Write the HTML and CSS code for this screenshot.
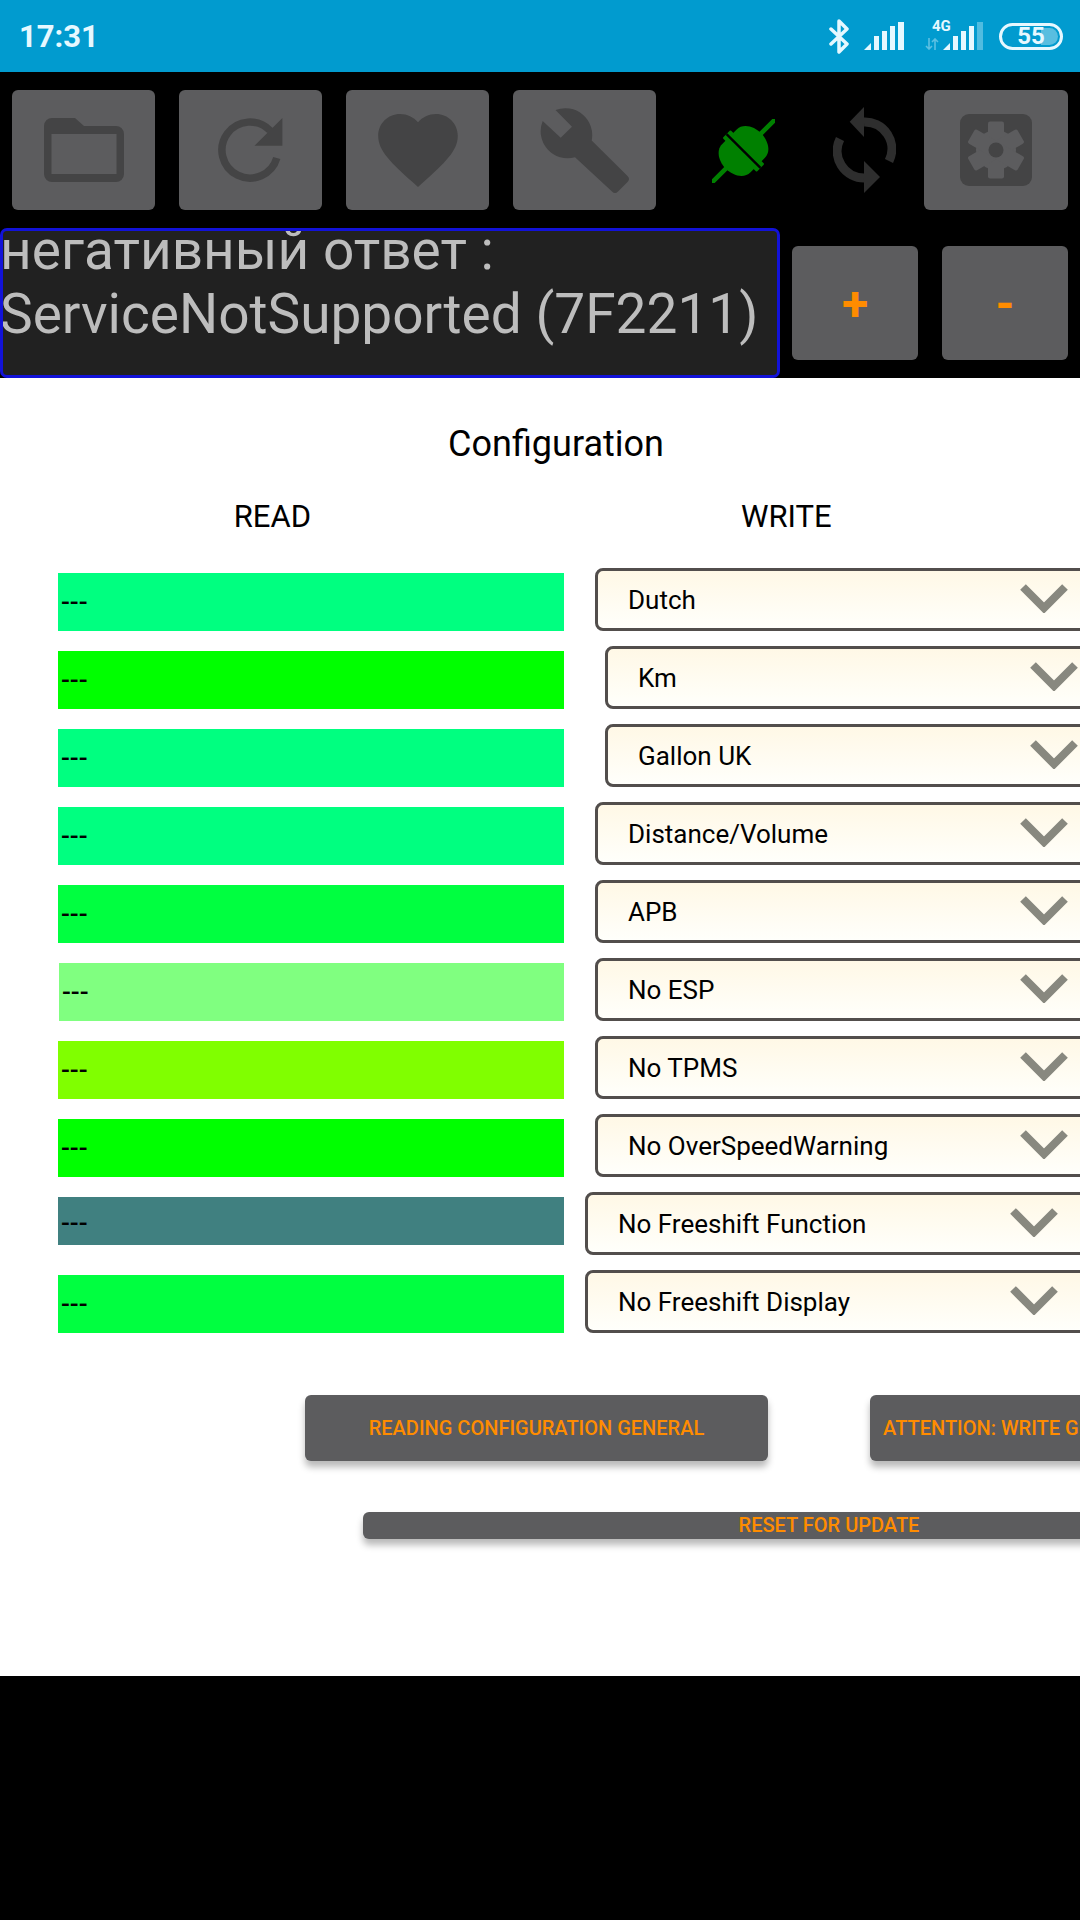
FILE: index.html
```html
<!doctype html>
<html lang="en">
  <head>
    <meta charset="UTF-8" />
    <meta name="viewport" content="width=device-width, initial-scale=1.0" />
    <title>Configuration</title>
    <link rel="stylesheet" href="styles.css">
  </head>
  <body>
    <div class="status-bar">
      <span class="clock">17:31</span>
      <div class="status-icons">
        <svg class="icon-bt" width="21" height="35" viewBox="0 0 21 35">
          <path d="M2 10 L18 25 L10 33 V2 L18 10 L2 25" />
        </svg>
        <svg class="icon-signal" width="40" height="28" viewBox="0 0 40 28">
          <path d="M0 28 L7 21 V28 Z" />
          <rect x="10" y="14" width="5" height="14" />
          <rect x="18" y="9" width="5" height="19" />
          <rect x="26" y="4" width="5" height="24" />
          <rect x="34" y="0" width="6" height="28" />
        </svg>
        <div class="net">
          <span class="net-label">4G</span>
          <svg class="net-arrows" width="14" height="12" viewBox="0 0 14 12">
            <path d="M4 0 V11 M1 8 L4 11 L7 8 M10 12 V1 M7 4 L10 1 L13 4" />
          </svg>
          <svg class="net-signal" width="40" height="28" viewBox="0 0 40 28">
            <path d="M0 28 L7 21 V28 Z" />
            <rect x="10" y="14" width="5" height="14" />
            <rect x="18" y="9" width="5" height="19" />
            <rect x="26" y="4" width="5" height="24" />
            <rect class="bar-off" x="34" y="0" width="6" height="28" />
          </svg>
        </div>
        <div class="battery">
          <span class="battery-fill"></span>
          <span class="battery-level">55</span>
        </div>
      </div>
    </div>

    <div class="toolbar">
      <button class="tool-btn">
        <svg width="80" height="64" viewBox="0 0 80 64">
          <path fill-rule="evenodd" d="M8 0 H31 L40 8 H72 a8 8 0 0 1 8 8 V56 a8 8 0 0 1 -8 8 H8 a8 8 0 0 1 -8 -8 V8 a8 8 0 0 1 8 -8 Z M7.5 16 V56 H72.5 V16 Z" />
        </svg>
      </button>
      <button class="tool-btn">
        <svg width="65" height="64" viewBox="0 0 65 64">
          <path class="ring" d="M52 12.5 A28 28 0 1 0 58.8 40" />
          <path d="M64.4 0 V27.7 H36.5 Z" />
        </svg>
      </button>
      <button class="tool-btn">
        <svg width="80" height="73" viewBox="2 3 20 18.35">
          <path d="M12 21.35l-1.45-1.32C5.4 15.36 2 12.28 2 8.5 2 5.42 4.42 3 7.5 3c1.74 0 3.41.81 4.5 2.09C13.09 3.81 14.76 3 16.5 3 19.58 3 22 5.42 22 8.5c0 3.78-3.4 6.86-8.55 11.54L12 21.35z" />
        </svg>
      </button>
      <button class="tool-btn">
        <svg width="89" height="87" viewBox="0 0 89 87">
          <path d="M15.5 3 L32 19.7 L20.7 30.7 L2.7 14 A27 27 0 0 0 35 50.3 L72 84.5 q3 3 6 0 L87.5 75 q3 -3 0 -6 L51.7 33.5 A27 27 0 0 0 15.5 3 Z" />
        </svg>
      </button>

      <svg class="plug" width="63" height="64" viewBox="0 0 63 64">
        <g transform="translate(31.5 32) rotate(-45)">
          <line class="plug-cable" x1="-43" y1="0" x2="43" y2="0" />
          <path class="plug-body" d="M3 -20 H10 C20 -20 25 -9 25 0 C25 9 20 20 10 20 H3 Z" />
          <path class="plug-body" d="M-3 -20 H-10 C-20 -20 -25 -9 -25 0 C-25 9 -20 20 -10 20 H-3 Z" />
          <rect class="plug-body" x="-5.5" y="-24" width="11" height="48" rx="1" />
          <rect x="-1.2" y="-24" width="2.4" height="48" />
        </g>
      </svg>

      <svg class="sync" width="63" height="86" viewBox="0 0 63 86">
        <path class="sync-arc" d="M31 15 A27 27 0 0 1 56 54" />
        <path class="sync-arc" d="M31 71 A27 27 0 0 1 7 32" />
        <path d="M16.7 14.7 L31 0 V30 Z" />
        <path d="M47 70 L31 54 V86 Z" />
      </svg>

      <button class="tool-btn tool-settings">
        <svg width="72" height="72" viewBox="0 0 72 72">
          <rect width="72" height="72" rx="9" />
          <g class="cog" transform="translate(36 36)">
            <circle r="20" />
            <rect x="-8" y="-28.5" width="16" height="57" rx="2" />
            <rect x="-8" y="-28.5" width="16" height="57" rx="2" transform="rotate(60)" />
            <rect x="-8" y="-28.5" width="16" height="57" rx="2" transform="rotate(120)" />
          </g>
          <circle cx="36" cy="36" r="7.5" />
        </svg>
      </button>
    </div>

    <div class="message-row">
      <div class="message">
        <p class="message-text">негативный ответ :<br />ServiceNotSupported (7F2211)</p>
      </div>
      <button class="step-btn step-plus">+</button>
      <button class="step-btn step-minus">-</button>
    </div>

    <div class="content">
      <h1 class="title">Configuration</h1>
      <div class="columns">
        <span class="col-read">READ</span>
        <span class="col-write">WRITE</span>
      </div>

      <div class="rows">
        <div class="row">
          <div class="field c-spring">---</div>
          <div class="select">
            <span>Dutch</span>
            <svg class="chevron" width="48" height="29" viewBox="0 0 48 29"><path d="M3 3 L24 24 L45 3" /></svg>
          </div>
        </div>
        <div class="row">
          <div class="field c-lime">---</div>
          <div class="select select-in">
            <span>Km</span>
            <svg class="chevron" width="48" height="29" viewBox="0 0 48 29"><path d="M3 3 L24 24 L45 3" /></svg>
          </div>
        </div>
        <div class="row">
          <div class="field c-spring">---</div>
          <div class="select select-in">
            <span>Gallon UK</span>
            <svg class="chevron" width="48" height="29" viewBox="0 0 48 29"><path d="M3 3 L24 24 L45 3" /></svg>
          </div>
        </div>
        <div class="row">
          <div class="field c-spring">---</div>
          <div class="select">
            <span>Distance/Volume</span>
            <svg class="chevron" width="48" height="29" viewBox="0 0 48 29"><path d="M3 3 L24 24 L45 3" /></svg>
          </div>
        </div>
        <div class="row">
          <div class="field c-mint">---</div>
          <div class="select">
            <span>APB</span>
            <svg class="chevron" width="48" height="29" viewBox="0 0 48 29"><path d="M3 3 L24 24 L45 3" /></svg>
          </div>
        </div>
        <div class="row">
          <div class="field field-in c-pale">---</div>
          <div class="select">
            <span>No ESP</span>
            <svg class="chevron" width="48" height="29" viewBox="0 0 48 29"><path d="M3 3 L24 24 L45 3" /></svg>
          </div>
        </div>
        <div class="row">
          <div class="field c-chart">---</div>
          <div class="select">
            <span>No TPMS</span>
            <svg class="chevron" width="48" height="29" viewBox="0 0 48 29"><path d="M3 3 L24 24 L45 3" /></svg>
          </div>
        </div>
        <div class="row">
          <div class="field c-lime">---</div>
          <div class="select">
            <span>No OverSpeedWarning</span>
            <svg class="chevron" width="48" height="29" viewBox="0 0 48 29"><path d="M3 3 L24 24 L45 3" /></svg>
          </div>
        </div>
        <div class="row">
          <div class="field field-short c-teal">---</div>
          <div class="select select-out">
            <span>No Freeshift Function</span>
            <svg class="chevron" width="48" height="29" viewBox="0 0 48 29"><path d="M3 3 L24 24 L45 3" /></svg>
          </div>
        </div>
        <div class="row">
          <div class="field c-mint">---</div>
          <div class="select select-out">
            <span>No Freeshift Display</span>
            <svg class="chevron" width="48" height="29" viewBox="0 0 48 29"><path d="M3 3 L24 24 L45 3" /></svg>
          </div>
        </div>
      </div>

      <div class="actions">
        <button class="action-btn">READING CONFIGURATION GENERAL</button>
        <button class="action-btn action-write">ATTENTION: WRITE GENERAL CONFIGURATION</button>
      </div>
      <button class="reset-btn">RESET FOR UPDATE</button>
    </div>
  </body>
</html>
```

FILE: styles.css
```css
:root {
  --btn: #5c5c5e;
  --icon: #444445;
  --accent: #ff8c00;
  --status: #019bcf;
  --status-fg: #e6f8ff;
}

* {
  margin: 0;
  padding: 0;
  box-sizing: border-box;
}

html,
body {
  width: 1080px;
  height: 1920px;
  overflow: hidden;
}

body {
  background: #000;
  font-family: Roboto, "Noto Sans", sans-serif;
}

button {
  border: none;
  font-family: Roboto, "Noto Sans", sans-serif;
}

/* status bar */

.status-bar {
  height: 72px;
  background: var(--status);
  display: flex;
  justify-content: space-between;
  align-items: center;
  padding: 0 17px 0 19px;
  color: var(--status-fg);
}

.clock {
  font-size: 31px;
  font-weight: 700;
}

.status-icons {
  display: flex;
  align-items: center;
}

.icon-bt path {
  fill: none;
  stroke: var(--status-fg);
  stroke-width: 3.5;
  stroke-linejoin: round;
  stroke-linecap: round;
}

.icon-signal {
  margin-left: 14px;
  fill: var(--status-fg);
}

.net {
  position: relative;
  width: 58px;
  height: 28px;
  margin-left: 21px;
  fill: var(--status-fg);
}

.net-label {
  position: absolute;
  left: 7px;
  top: -3px;
  font-size: 15px;
  line-height: 15px;
  font-weight: 700;
}

.net-arrows {
  position: absolute;
  left: 0;
  bottom: 0;
  opacity: 0.4;
}

.net-arrows path {
  fill: none;
  stroke: var(--status-fg);
  stroke-width: 1.6;
}

.net-signal {
  position: absolute;
  right: 0;
  top: 0;
}

.bar-off {
  opacity: 0.35;
}

.battery {
  position: relative;
  width: 64px;
  height: 27px;
  margin-left: 16px;
  border: 3px solid var(--status-fg);
  border-radius: 14px;
  display: flex;
  justify-content: center;
  align-items: center;
  overflow: hidden;
}

.battery-fill {
  position: absolute;
  top: 2px;
  bottom: 2px;
  right: 2px;
  width: 17px;
  border-radius: 0 9px 9px 0;
  background: rgba(255, 255, 255, 0.35);
}

.battery-level {
  position: relative;
  font-size: 24px;
  line-height: 24px;
  font-weight: 700;
}

/* toolbar */

.toolbar {
  height: 156px;
  display: flex;
  align-items: flex-start;
  padding: 18px 0 0 12px;
  gap: 24px;
}

.tool-btn {
  width: 143px;
  height: 120px;
  background: var(--btn);
  border-radius: 6px;
  display: flex;
  justify-content: center;
  align-items: center;
  fill: var(--icon);
}

.tool-btn .ring {
  fill: none;
  stroke: var(--icon);
  stroke-width: 7.5;
}

.tool-btn .cog {
  fill: var(--btn);
}

.plug {
  margin: 29px 0 0 32px;
  fill: #000;
}

.plug-cable {
  stroke: #008000;
  stroke-width: 4.5;
  stroke-linecap: round;
}

.plug-body {
  fill: #008000;
}

.sync {
  margin: 17px 0 0 34px;
  fill: #2e2e2e;
}

.sync-arc {
  fill: none;
  stroke: #2e2e2e;
  stroke-width: 9;
}

.tool-settings {
  width: 144px;
  margin-left: 4px;
}

/* message row */

.message-row {
  height: 150px;
  display: flex;
  align-items: flex-start;
}

.message {
  width: 780px;
  height: 150px;
  flex-shrink: 0;
  background: #212121;
  border: 3px solid #1212d8;
  border-radius: 7px;
  overflow: hidden;
}

.message-text {
  margin: -13px 0 0 -3px;
  color: #bdbdbd;
  font-size: 55px;
  line-height: 64px;
  white-space: nowrap;
}

.step-btn {
  width: 126px;
  height: 114px;
  margin-top: 18px;
  background: var(--btn);
  border-radius: 6px;
  color: var(--accent);
  font-size: 48px;
  font-weight: 700;
}

.step-plus {
  margin-left: 12px;
}

.step-minus {
  margin-left: 24px;
}

/* content */

.content {
  height: 1298px;
  background: #fff;
  overflow: hidden;
}

.title {
  margin-top: 43px;
  margin-left: 78px;
  width: 956px;
  text-align: center;
  font-size: 36px;
  line-height: 46px;
  font-weight: 400;
  color: #000;
}

.columns {
  display: flex;
  margin-top: 31px;
  font-size: 31px;
  line-height: 38px;
  color: #000;
}

.col-read {
  width: 311px;
  text-align: right;
}

.col-write {
  margin-left: 430px;
}

.rows {
  margin-top: 32px;
  display: flex;
  flex-direction: column;
  gap: 15px;
}

.row {
  height: 63px;
  display: flex;
  padding-left: 58px;
  white-space: nowrap;
}

.field {
  width: 506px;
  height: 58px;
  flex-shrink: 0;
  margin-top: 5px;
  padding: 0 3px;
  font-size: 26px;
  font-weight: 500;
  line-height: 58px;
  color: #000;
}

.field-in {
  margin-left: 1px;
  width: 505px;
}

.field-short {
  height: 48px;
  line-height: 52px;
}

.c-spring { background: #00ff80; }
.c-lime { background: #00ff00; }
.c-mint { background: #00ff40; }
.c-pale { background: #80ff80; }
.c-chart { background: #80ff00; }
.c-teal { background: #408080; }

.select {
  width: 560px;
  height: 63px;
  flex-shrink: 0;
  margin-left: 31px;
  padding-left: 30px;
  border: 3px solid #524e4c;
  border-radius: 8px;
  background: linear-gradient(#fff8e6, #fffffb);
  display: flex;
  align-items: center;
  font-size: 26px;
  color: #000;
}

.select span {
  width: 392px;
  flex-shrink: 0;
}

.select-in {
  margin-left: 41px;
}

.select-out {
  margin-left: 21px;
}

.chevron {
  flex-shrink: 0;
  margin-top: -3px;
}

.chevron path {
  fill: none;
  stroke: #88887f;
  stroke-width: 8;
}

.actions {
  display: flex;
  gap: 102px;
  width: 1400px;
  margin-top: 62px;
  padding-left: 305px;
}

.action-btn,
.reset-btn {
  background: var(--btn);
  color: var(--accent);
  border-radius: 6px;
  font-size: 20px;
  font-weight: 500;
  box-shadow: 0 6px 7px rgba(0, 0, 0, 0.28);
}

.action-btn {
  width: 463px;
  height: 66px;
  flex-shrink: 0;
}

.action-write {
  padding-right: 8px;
}

.reset-btn {
  display: block;
  width: 932px;
  height: 27px;
  margin: 51px 0 0 363px;
  line-height: 27px;
}
```
